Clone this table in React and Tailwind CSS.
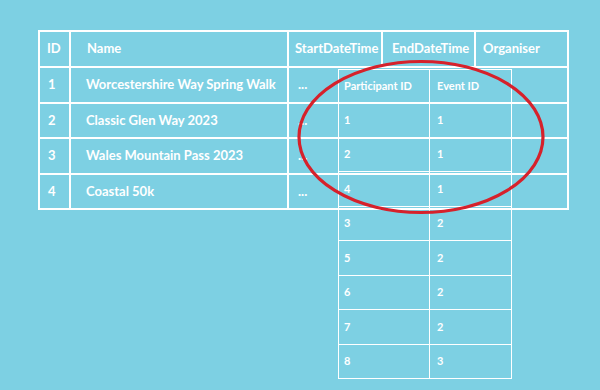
const events = [
  { id: 1, name: 'Worcestershire Way Spring Walk' },
  { id: 2, name: 'Classic Glen Way 2023' },
  { id: 3, name: 'Wales Mountain Pass 2023' },
  { id: 4, name: 'Coastal 50k' },
]

const participants = [
  [1, 1],
  [2, 1],
  [4, 1],
  [3, 2],
  [5, 2],
  [6, 2],
  [7, 2],
  [8, 3],
]

const cell = 'border-2 border-white text-left align-middle'

export default function App() {
  return (
    <div className="relative h-[390px] w-[600px] overflow-hidden bg-[#7dd0e3] pl-[38px] pt-[30px] font-['Lato',sans-serif] font-bold text-white">
      <table className="w-[529px] table-fixed border-collapse text-[13px]">
        <colgroup>
          <col className="w-[31px]" />
          <col className="w-[218px]" />
          <col className="w-[94px]" />
          <col className="w-[93px]" />
          <col className="w-[93px]" />
        </colgroup>
        <thead>
          <tr className="h-[36px]">
            <th className={`${cell} pl-[7px] font-bold`}>ID</th>
            <th className={`${cell} pl-[16px] font-bold`}>Name</th>
            <th className={`${cell} pl-[6px] font-bold`}>StartDateTime</th>
            <th className={`${cell} pl-[9px] font-bold`}>EndDateTime</th>
            <th className={`${cell} pl-[7px] font-bold`}>Organiser</th>
          </tr>
        </thead>
        <tbody>
          {events.map((e) => (
            <tr key={e.id} className="h-[35.5px]">
              <td className={`${cell} pl-[8px]`}>{e.id}</td>
              <td className={`${cell} pl-[15px]`}>{e.name}</td>
              <td className={`${cell} pl-[9px]`} colSpan={3}>
                ...
              </td>
            </tr>
          ))}
        </tbody>
      </table>

      {/* linking table laid over the events */}
      <table className="absolute left-[338px] top-[69px] w-[173px] table-fixed border-collapse text-[11px]">
        <colgroup>
          <col className="w-[91px]" />
          <col className="w-[82px]" />
        </colgroup>
        <thead>
          <tr className="h-[33px]">
            <th className="border-[1.5px] border-white pl-[5px] text-left font-bold">Participant ID</th>
            <th className="border-[1.5px] border-white pl-[7px] text-left font-bold">Event ID</th>
          </tr>
        </thead>
        <tbody>
          {participants.map(([p, ev], i) => (
            <tr key={i} className="h-[34.5px]">
              <td className="border-[1.5px] border-white pl-[5px]">{p}</td>
              <td className="border-[1.5px] border-white pl-[7px]">{ev}</td>
            </tr>
          ))}
        </tbody>
      </table>

      <svg className="pointer-events-none absolute inset-0" width="600" height="390" viewBox="0 0 600 390">
        <ellipse cx="421" cy="137" rx="122" ry="75.5" fill="none" stroke="#d6212b" strokeWidth="3.2" />
      </svg>
    </div>
  )
}
